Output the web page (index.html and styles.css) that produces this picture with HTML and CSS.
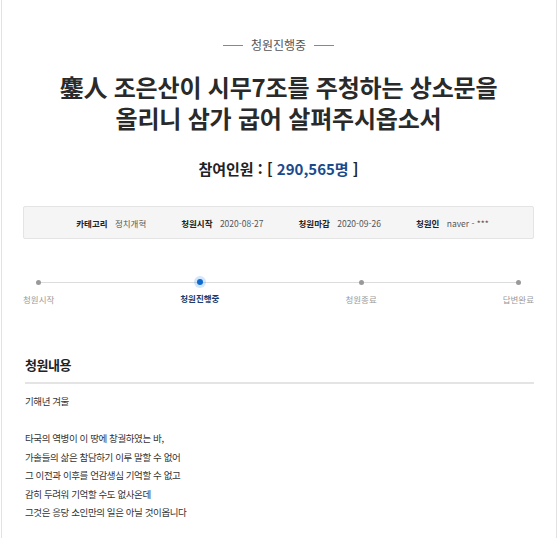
FILE: index.html
```html
<!DOCTYPE html>
<html lang="ko">
<head>
    <meta charset="UTF-8">
    <meta name="viewport" content="width=device-width, initial-scale=1.0">
    <title>청원진행중</title>
    <link rel="stylesheet" href="styles.css">
</head>
<body>
    <div class="page">
        <div class="status"><span>청원진행중</span></div>
        <h1 class="title"><span>鏖人 조은산이 시무7조를 주청하는 상소문을</span><span>올리니 삼가 굽어 살펴주시옵소서</span></h1>
        <div class="count">참여인원 : [ <span class="num">290,565명</span> ]</div>

        <ul class="info">
            <li><b>카테고리</b> 정치개혁</li>
            <li><b>청원시작</b> 2020-08-27</li>
            <li><b>청원마감</b> 2020-09-26</li>
            <li><b>청원인</b> naver - ***</li>
        </ul>

        <div class="steps">
            <div class="step"><i></i><span>청원시작</span></div>
            <div class="step active"><i></i><span>청원진행중</span></div>
            <div class="step"><i></i><span>청원종료</span></div>
            <div class="step"><i></i><span>답변완료</span></div>
        </div>

        <h2 class="section">청원내용</h2>
        <div class="content">
            <p>기해년 겨울</p>
            <p>&nbsp;</p>
            <p>타국의 역병이 이 땅에 창궐하였는 바,</p>
            <p>가솔들의 삶은 참담하기 이루 말할 수 없어</p>
            <p>그 이전과 이후를 언감생심 기억할 수 없고</p>
            <p>감히 두려워 기억할 수도 없사온데</p>
            <p>그것은 응당 소인만의 일은 아닐 것이옵니다</p>
        </div>
    </div>
</body>
</html>
```

FILE: styles.css
```css
body {
    margin: 0;
    font-family: "Noto Sans CJK KR", "Noto Sans", sans-serif;
    background: #fff;
    color: #333;
}
.page {
    margin-left: 1px;
    width: 556px;
    min-height: 538px;
    box-sizing: border-box;
    border-left: 1px solid #e2e2e2;
    border-right: 1px solid #e2e2e2;
    padding: 37px 22px 0 21px;
}
.status {
    display: flex;
    justify-content: center;
    align-items: center;
    gap: 8px;
    font-size: 12px;
    line-height: 16px;
    color: #555;
}
.status::before,
.status::after {
    content: "";
    width: 20px;
    height: 1px;
    background: #888;
}
.title {
    margin: 18px 0 0;
    display: flex;
    flex-direction: column;
    align-items: center;
    font-size: 24px;
    line-height: 31px;
    font-weight: 700;
    color: #2a2a2a;
    letter-spacing: -0.2px;
}
.title span {
    display: block;
    height: 31px;
}
.count {
    margin-top: 25px;
    text-align: center;
    font-size: 15px;
    line-height: 22px;
    font-weight: 700;
    color: #222;
}
.count .num {
    color: #1b4a8c;
}
.info {
    list-style: none;
    margin: 26px 0 0;
    padding: 0 0 0 8px;
    height: 33px;
    box-sizing: border-box;
    display: flex;
    justify-content: center;
    align-items: center;
    gap: 35px;
    background: #f5f5f5;
    border: 1px solid #e4e4e4;
    border-radius: 2px;
    font-size: 8.5px;
    color: #555;
}
.info b {
    color: #222;
    margin-right: 5px;
}
.steps {
    margin-top: 40px;
    display: flex;
    justify-content: space-between;
    position: relative;
}
.steps::before {
    content: "";
    position: absolute;
    left: 16px;
    right: 16px;
    top: 3px;
    height: 1px;
    background: #dcdcdc;
}
.step {
    display: flex;
    flex-direction: column;
    align-items: center;
    gap: 8px;
    font-size: 8.5px;
    line-height: 12px;
    color: #999;
}
.step i {
    position: relative;
    width: 5px;
    height: 5px;
    margin-top: 1px;
    border-radius: 50%;
    background: #999;
}
.step.active {
    color: #1b3d6e;
    font-weight: 700;
}
.step.active i {
    width: 6px;
    height: 6px;
    margin-top: 0;
    margin-bottom: -1px;
    background: #0d6bd1;
    box-shadow: 0 0 0 3px rgba(60, 140, 230, 0.22);
}
.section {
    margin: 51px 0 0 2px;
    padding-bottom: 8px;
    border-bottom: 2px solid #e4e4e4;
    font-size: 13px;
    line-height: 18px;
    font-weight: 700;
    color: #222;
    letter-spacing: -0.5px;
}
.content {
    margin: 8px 0 0 2px;
    font-size: 9.5px;
    line-height: 18.5px;
    color: #333;
    letter-spacing: -0.4px;
}
.content p {
    margin: 0;
}
```
